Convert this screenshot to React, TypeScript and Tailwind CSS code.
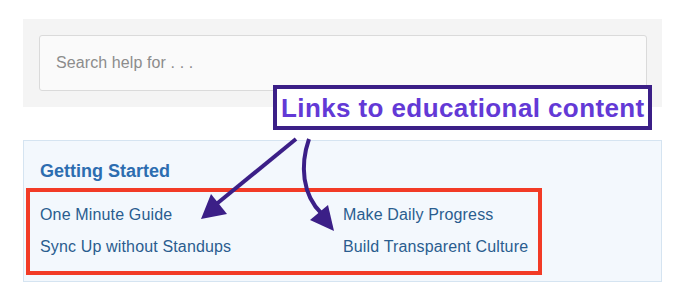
import React from "react";

const links = [
  "One Minute Guide",
  "Make Daily Progress",
  "Sync Up without Standups",
  "Build Transparent Culture",
];

export default function App() {
  return (
    <div className="relative w-[690px] h-[298px] overflow-hidden bg-white font-['Liberation_Sans',Arial,sans-serif]">
      {/* Search */}
      <div className="mt-[19px] ml-[23px] w-[639px] h-[88px] bg-[#f4f4f4] pt-4 pl-4 pr-[15px]">
        <input
          className="h-14 w-full rounded-[3px] border border-[#dadada] bg-[#fafafa] pl-4 text-[16px] tracking-[0.1px] text-[#555] placeholder:text-[#8c8c8c] outline-none"
          placeholder="Search help for . . ."
        />
      </div>

      {/* Getting started */}
      <div className="mt-[33px] ml-[23px] w-[639px] h-[142px] border border-[#d5e4f1] bg-[#f3f8fd] pt-[19px] pl-4">
        <h3 className="text-[18px] leading-[22px] font-bold text-[#2c6db0]">
          Getting Started
        </h3>
        <div className="mt-[23px] grid grid-cols-[303px_1fr] gap-y-3">
          {links.map((l) => (
            <a key={l} className="text-[16px] leading-5 tracking-[0.15px] text-[#2a5d8f]">
              {l}
            </a>
          ))}
        </div>
      </div>

      {/* annotation overlays */}
      <div className="absolute left-[26px] top-[188px] w-[516px] h-[87px] border-4 border-[#f23b26]" />
      <div className="absolute left-[273px] top-[85px] w-[379px] h-[45px] border-4 border-[#3b1f87] bg-white pl-1 flex items-center">
        <span className="text-[26px] leading-none font-bold tracking-[0.4px] text-[#6339d6] whitespace-nowrap">
          Links to educational content
        </span>
      </div>
      <svg className="absolute left-0 top-0" width="690" height="298" viewBox="0 0 690 298">
        <g stroke="#3b1f87" strokeWidth="4" fill="none" strokeLinecap="butt">
          <path d="M296 139 L214 206" />
          <path d="M309 139 C300 165 302 195 322 214" />
        </g>
        <g fill="#3b1f87">
          <polygon points="201,219 211,194 227,214" />
          <polygon points="334,231 310,220 328,205" />
        </g>
      </svg>
    </div>
  );
}
